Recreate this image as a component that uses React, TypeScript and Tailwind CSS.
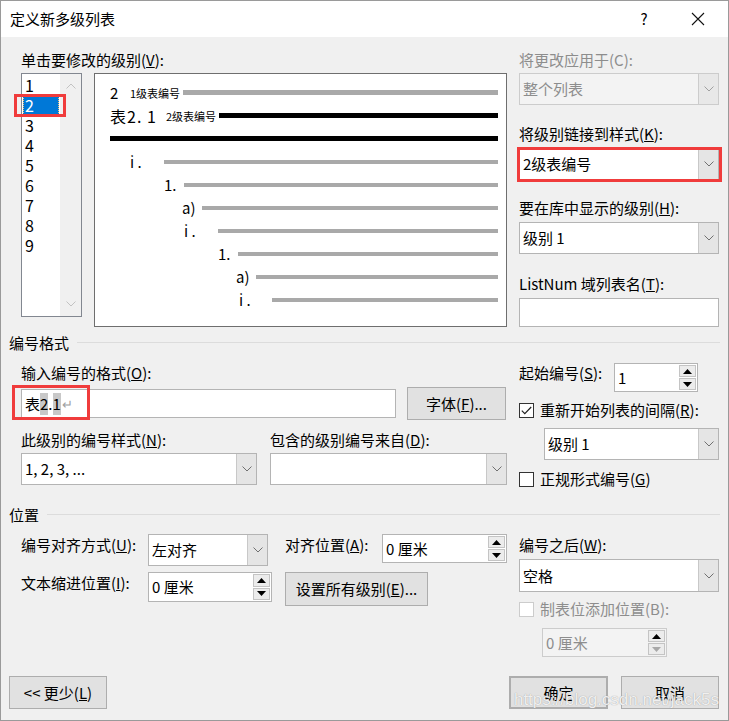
import type { ReactNode } from 'react';

function Chevron({ up, color = '#606060' }: { up?: boolean; color?: string }) {
  return (
    <svg width="10" height="6" viewBox="0 0 10 6">
      <path d={up ? 'M0.5 5.5 L5 1 L9.5 5.5' : 'M0.5 0.5 L5 5 L9.5 0.5'} fill="none" stroke={color} strokeWidth="1" />
    </svg>
  );
}

function Tri({ up, color = '#000' }: { up?: boolean; color?: string }) {
  return (
    <svg width="9" height="5" viewBox="0 0 9 5">
      <path d={up ? 'M0 5 L4.5 0 L9 5 Z' : 'M0 0 L4.5 5 L9 0 Z'} fill={color} />
    </svg>
  );
}

function Combo({ text, disabled, className }: { text?: ReactNode; disabled?: boolean; className: string }) {
  return (
    <div
      className={`flex border ${disabled ? 'border-[#cccccc] bg-[#f3f3f3] text-[#8d8d8d]' : 'border-[#b4b4b4] bg-white'} ${className}`}
    >
      <div className="flex-1 flex items-center pl-[3px] leading-[20px]">{text}</div>
      <div className={`w-[20px] flex items-center justify-center border-l ${disabled ? 'border-[#cccccc] bg-[#e8e8e8]' : 'border-[#c8c8c8] bg-[#e5e5e5]'}`}>
        <Chevron color={disabled ? '#a0a0a0' : '#707070'} />
      </div>
    </div>
  );
}

function Spinner({ text, disabled, className }: { text: string; disabled?: boolean; className: string }) {
  return (
    <div className={`flex border ${disabled ? 'border-[#cccccc] bg-[#f3f3f3] text-[#8d8d8d]' : 'border-[#b4b4b4] bg-white'} ${className}`}>
      <div className="flex-1 flex items-center pl-[3px] leading-[20px]">{text}</div>
      <div className="w-[19px] flex flex-col p-[1px] gap-[1px]">
        <div className="flex-1 flex items-center justify-center border border-[#c4c4c4] bg-[#ececec]">
          <Tri up />
        </div>
        <div className="flex-1 flex items-center justify-center border border-[#c4c4c4] bg-[#ececec]">
          <Tri color={disabled ? '#a8a8a8' : '#000'} />
        </div>
      </div>
    </div>
  );
}

function Btn({ children, className }: { children: ReactNode; className: string }) {
  return (
    <div className={`flex items-center justify-center border border-[#adadad] bg-[#e1e1e1] leading-[20px] ${className}`}>
      {children}
    </div>
  );
}

function Check({ checked, disabled }: { checked?: boolean; disabled?: boolean }) {
  return (
    <div className={`w-[15px] h-[15px] border bg-white flex items-center justify-center ${disabled ? 'border-[#cccccc]' : 'border-[#333333]'}`}>
      {checked && (
        <svg width="11" height="9" viewBox="0 0 11 9">
          <path d="M0.8 4.6 L3.8 7.6 L10.2 1" fill="none" stroke="#222" strokeWidth="1.2" />
        </svg>
      )}
    </div>
  );
}

function Label({ children, className = '' }: { children: ReactNode; className?: string }) {
  return <div className={`h-[20px] leading-[20px] whitespace-nowrap ${className}`}>{children}</div>;
}

function Section({ title, className }: { title: string; className: string }) {
  return (
    <div className={`flex items-center h-[20px] pl-[8px] pr-[8px] ${className}`}>
      <span className="leading-[20px]">{title}</span>
      <div className="flex-1 h-px bg-[#dcdcdc] ml-[8px] mt-[-2px]" />
    </div>
  );
}

const levels = ['1', '2', '3', '4', '5', '6', '7', '8', '9'];

// preview rows below the two headings: indent, label width, bar
const subRows = [
  { ml: 'ml-[35px]', w: 'w-[34px]', t: 'i .' },
  { ml: 'ml-[69px]', w: 'w-[20px]', t: '1.' },
  { ml: 'ml-[87px]', w: 'w-[20px]', t: 'a)' },
  { ml: 'ml-[89px]', w: 'w-[34px]', t: 'i .' },
  { ml: 'ml-[123px]', w: 'w-[20px]', t: '1.' },
  { ml: 'ml-[141px]', w: 'w-[20px]', t: 'a)' },
  { ml: 'ml-[144px]', w: 'w-[33px]', t: 'i .' },
];

function Preview() {
  return (
    <div className="ml-[12px] w-[413px] h-[254px] border border-[#6e6e6e] bg-white flex flex-col pt-[7px] pr-[8px]">
      <div className="h-[23px] flex items-center ml-[15px]">
        <span className="w-[20px] text-[15px] leading-[20px]">2</span>
        <span className="text-[11px] leading-[14px] mr-[3px]">1级表编号</span>
        <div className="flex-1 h-[5px] bg-[#a9a9a9]" />
      </div>
      <div className="h-[23px] flex items-center ml-[15px]">
        <span className="w-[56px] text-[16px] leading-[20px] tracking-[1px]">表2. 1</span>
        <span className="text-[11px] leading-[14px] mr-[3px]">2级表编号</span>
        <div className="flex-1 h-[5px] bg-black" />
      </div>
      <div className="h-[23px] flex items-center ml-[15px]">
        <div className="flex-1 h-[5px] bg-black" />
      </div>
      {subRows.map((r, i) => (
        <div key={i} className={`h-[23px] flex items-center ${r.ml}`}>
          <span className={`${r.w} text-[15px] leading-[20px]`}>{r.t}</span>
          <div className="flex-1 h-[4px] bg-[#a9a9a9]" />
        </div>
      ))}
    </div>
  );
}

export default function App() {
  return (
    <div className="relative w-[729px] h-[721px] border border-[#9a9a9a] bg-[#f0f0f0] flex flex-col text-[15px] text-black font-['Noto_Sans_CJK_SC','Noto_Sans',sans-serif]">
      {/* title bar */}
      <div className="h-[36px] bg-white flex items-center pl-[9px]">
        <span className="flex-1 leading-[20px]">定义新多级列表</span>
        <span className="w-[20px] text-center leading-[20px] mr-[37px]">?</span>
        <svg width="14" height="14" viewBox="0 0 14 14" className="mr-[23px]">
          <path d="M1 1 L13 13 M13 1 L1 13" stroke="#111" strokeWidth="1.1" />
        </svg>
      </div>

      {/* level list, preview, right column */}
      <div className="flex mt-[13px] pl-[20px]">
        <div className="w-[486px] flex flex-col">
          <Label>
            单击要修改的级别(<u>V</u>):
          </Label>
          <div className="mt-[3px] flex items-start">
            <div className="w-[61px] h-[244px] border border-[#828790] bg-white flex">
              <div className="flex-1 flex flex-col pt-[1px]">
                {levels.map(l =>
                  l === '2' ? (
                    <div key={l} className="relative h-[20px] mx-[1px] bg-[#0078d7] border border-dotted border-[#f2c27a] text-white pl-[1px] leading-[18px] text-[16px]">
                      {l}
                      <div className="absolute left-[-10px] right-[-8px] top-[-2px] bottom-[-3px] border-[3px] border-[#f03c3c]" />
                    </div>
                  ) : (
                    <div key={l} className="h-[20px] pl-[3px] leading-[20px] text-[16px]">
                      {l}
                    </div>
                  )
                )}
              </div>
              <div className="w-[21px] bg-[#f0f0f0] flex flex-col items-center justify-between pt-[9px] pb-[9px]">
                <Chevron up color="#c2c2c2" />
                <Chevron color="#c2c2c2" />
              </div>
            </div>
            <Preview />
          </div>
        </div>

        <div className="ml-[12px] w-[200px] flex flex-col">
          <Label className="text-[#8d8d8d]">将更改应用于(C):</Label>
          <Combo disabled text="整个列表" className="mt-[3px] h-[32px]" />
          <Label className="mt-[19px]">
            将级别链接到样式(<u>K</u>):
          </Label>
          <div className="relative mt-[4px] h-[32px]">
            <Combo text="2级表编号" className="h-[32px]" />
            <div className="absolute left-[-2px] right-[-3px] top-[-1px] bottom-[-2px] border-[3px] border-[#f03c3c]" />
          </div>
          <Label className="mt-[18px]">
            要在库中显示的级别(<u>H</u>):
          </Label>
          <Combo text="级别 1" className="mt-[4px] h-[32px]" />
          <Label className="mt-[20px]">
            ListNum 域列表名(<u>T</u>):
          </Label>
          <div className="mt-[4px] h-[29px] border border-[#b4b4b4] bg-white" />
        </div>
      </div>

      <Section title="编号格式" className="mt-[6px]" />

      {/* number format */}
      <div className="flex pl-[20px]">
        <div className="w-[486px] flex flex-col">
          <Label className="mt-[10px]">
            输入编号的格式(<u>O</u>):
          </Label>
          <div className="mt-[4px] h-[33px] flex items-center">
            <div className="relative w-[375px] h-[29px] border border-[#b4b4b4] bg-white flex items-center pl-[3px]">
              <span className="leading-[22px]">表</span>
              <span className="leading-[22px] bg-[#c8c8c8]">2</span>
              <span className="leading-[22px]">.</span>
              <span className="leading-[22px] bg-[#c8c8c8]">1</span>
              <span className="leading-[22px] text-[#a0a0a0] text-[13px] ml-[1px]">↵</span>
              <div className="absolute left-[-10px] top-[-5px] w-[78px] h-[35px] border-[3px] border-[#f03c3c]" />
            </div>
            <Btn className="ml-[11px] w-[99px] h-[33px]">
              字体(<u>F</u>)...
            </Btn>
          </div>
          <div className="mt-[10px] flex">
            <Label className="w-[249px]">
              此级别的编号样式(<u>N</u>):
            </Label>
            <Label>
              包含的级别编号来自(<u>D</u>):
            </Label>
          </div>
          <div className="mt-[3px] flex">
            <Combo text="1, 2, 3, ..." className="w-[236px] h-[32px]" />
            <Combo className="ml-[13px] w-[237px] h-[32px]" />
          </div>
        </div>

        <div className="ml-[12px] w-[200px] flex flex-col">
          <div className="mt-[10px] flex items-start">
            <Label className="w-[95px]">
              起始编号(<u>S</u>):
            </Label>
            <Spinner text="1" className="w-[84px] h-[29px]" />
          </div>
          <div className="mt-[8px] h-[20px] flex items-center">
            <Check checked />
            <span className="ml-[6px] leading-[20px] whitespace-nowrap">
              重新开始列表的间隔(<u>R</u>):
            </span>
          </div>
          <Combo text="级别 1" className="mt-[8px] ml-[25px] h-[32px]" />
          <div className="mt-[9px] h-[20px] flex items-center">
            <Check />
            <span className="ml-[6px] leading-[20px]">
              正规形式编号(<u>G</u>)
            </span>
          </div>
        </div>
      </div>

      <Section title="位置" className="mt-[16px]" />

      {/* position */}
      <div className="flex pl-[20px]">
        <div className="w-[486px] flex flex-col">
          <div className="mt-[9px] flex items-start">
            <Label className="w-[127px] mt-[1px]">
              编号对齐方式(<u>U</u>):
            </Label>
            <Combo text="左对齐" className="w-[120px] h-[32px]" />
            <Label className="ml-[17px] w-[97px] mt-[1px]">
              对齐位置(<u>A</u>):
            </Label>
            <Spinner text="0 厘米" className="w-[125px] h-[29px]" />
          </div>
          <div className="mt-[6px] flex items-start">
            <Label className="w-[127px] mt-[1px]">
              文本缩进位置(<u>I</u>):
            </Label>
            <Spinner text="0 厘米" className="w-[124px] h-[30px]" />
            <Btn className="ml-[13px] w-[143px] h-[34px]">
              设置所有级别(<u>E</u>)...
            </Btn>
          </div>
        </div>

        <div className="ml-[12px] w-[200px] flex flex-col">
          <Label className="mt-[10px]">
            编号之后(<u>W</u>):
          </Label>
          <Combo text="空格" className="mt-[4px] h-[33px]" />
          <div className="mt-[7px] h-[20px] flex items-center">
            <Check disabled />
            <span className="ml-[6px] leading-[20px] text-[#8d8d8d]">制表位添加位置(B):</span>
          </div>
          <Spinner disabled text="0 厘米" className="mt-[9px] ml-[23px] w-[125px] h-[29px]" />
        </div>
      </div>

      {/* footer */}
      <div className="mt-auto mb-[11px] flex items-center pl-[8px] pr-[9px]">
        <Btn className="w-[98px] h-[33px]">
          &lt;&lt; 更少(<u>L</u>)
        </Btn>
        <div className="flex-1" />
        <Btn className="w-[99px] h-[33px] border-2 border-[#0078d7]">确定</Btn>
        <Btn className="ml-[13px] w-[98px] h-[33px]">取消</Btn>
      </div>

      <div className="absolute right-[9px] bottom-[9px] text-[17px] leading-[22px] text-white/85 font-['Liberation_Sans',sans-serif] [text-shadow:0_0_1px_#8a8a8a]">
        https://blog.csdn.net/jack5s
      </div>
    </div>
  );
}
